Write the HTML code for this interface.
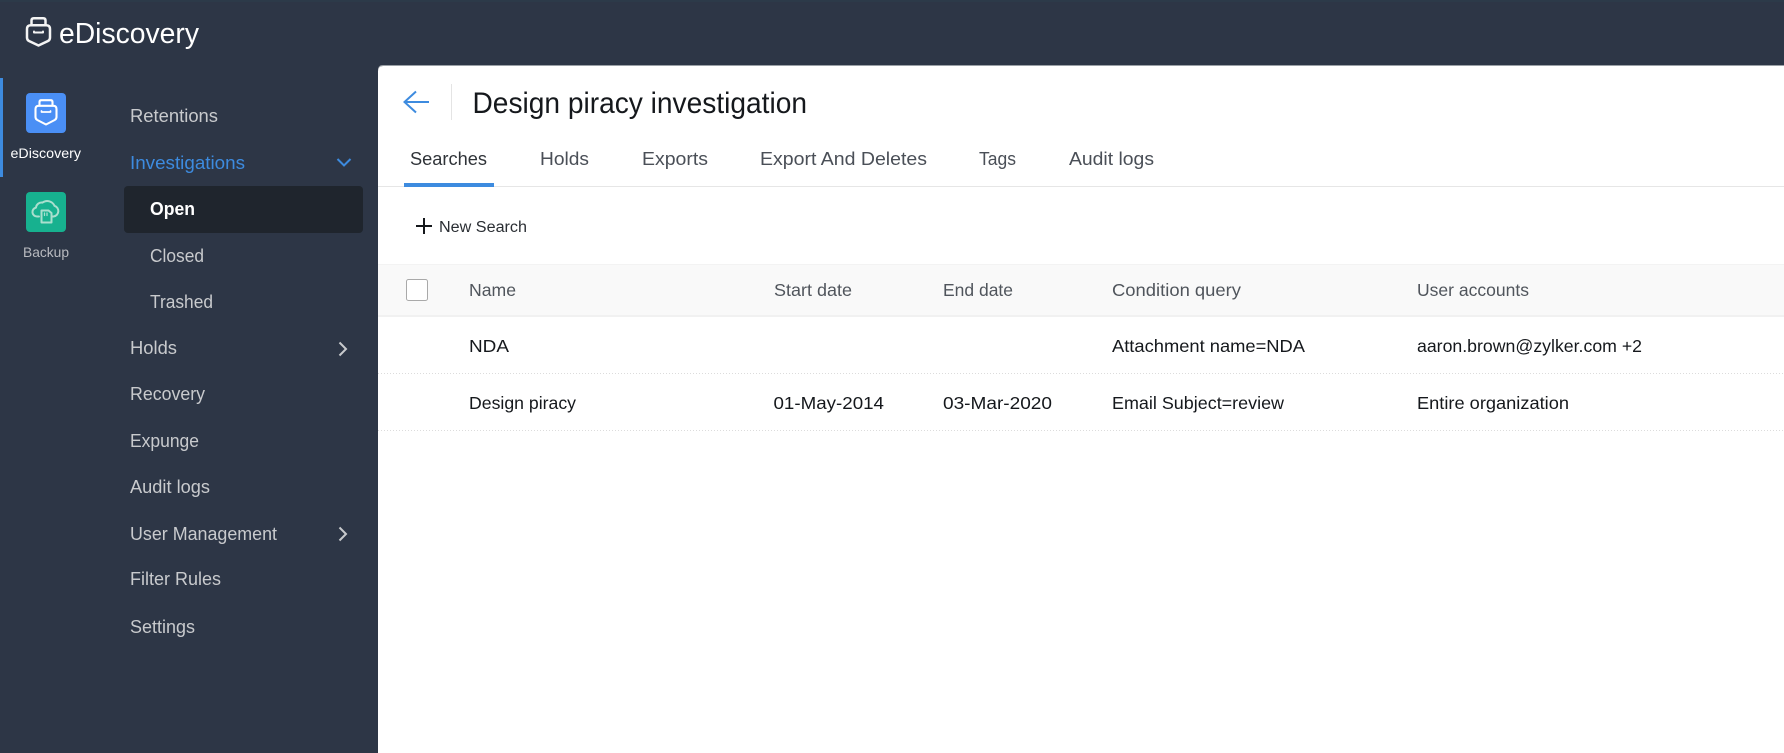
<!DOCTYPE html>
<html lang="en">
<head>
<meta charset="utf-8">
<title>eDiscovery</title>
<style>
html,body{margin:0;padding:0;width:1784px;height:753px;overflow:hidden;background:#2d3646}
svg{display:block}
text{font-family:"Liberation Sans",sans-serif}
.m{font-size:18.500px;fill:#c8cacd}
.t{font-size:18.500px;fill:#4a4f57}
.h{font-size:17.500px;fill:#50555c}
.c{font-size:17.500px;fill:#15181c}
</style>
</head>
<body>
<svg width="1784" height="753" viewBox="0 0 1784 753" xmlns="http://www.w3.org/2000/svg">
<rect width="1784" height="753" fill="#2d3646"/>
<rect x="0" y="0" width="1784" height="2" fill="#2c3a49"/>

<!-- Logo -->
<g fill="none" stroke="#f4f4f4" stroke-width="2.500" stroke-linejoin="round" stroke-linecap="round">
<path d="M31.500 25v-4.500q0-2.300 2.300-2.300h9.400q2.300 0 2.300 2.300V25"/>
<path d="M27 29q0-3.800 3.800-3.800h15.400q3.800 0 3.800 3.800v8.500q0 2.500-2 3.500l-9.500 4.500-9.500-4.500q-2-1-2-3.500z"/>
<path d="M34 31.500v1h9v-1" stroke-width="2"/>
</g>
<text x="59" y="43" font-size="29" fill="#fff" textLength="140" lengthAdjust="spacingAndGlyphs">eDiscovery</text>

<!-- App rail -->
<rect x="0" y="78" width="3" height="99" fill="#3d8bdf"/>
<rect x="26" y="93" width="40" height="40" rx="4" fill="#4a8ff5"/>
<g fill="none" stroke="#fff" stroke-width="2.100" stroke-linejoin="round" stroke-linecap="round">
<path d="M39.500 105.500v-3.500q0-1.800 1.800-1.800h9.400q1.800 0 1.800 1.800v3.500"/>
<path d="M35.500 109q0-3.200 3.200-3.200h14.600q3.200 0 3.200 3.200v8q0 2-1.800 3l-8.700 4.500-8.700-4.500q-1.800-1-1.800-3z"/>
<path d="M41.500 111v1h9v-1" stroke-width="1.700"/>
</g>
<text x="10.500" y="158" font-size="14" fill="#fff" textLength="70.500" lengthAdjust="spacingAndGlyphs">eDiscovery</text>

<rect x="26" y="192" width="40" height="40" rx="4" fill="#17b18f"/>
<g fill="none" stroke="#a9dfce" stroke-width="2" stroke-linejoin="round" stroke-linecap="round">
<path d="M39 216.500h-2a4.500 4.500 0 0 1-1-8.900 5.500 5.500 0 0 1 6.500-5 8 8 0 0 1 12 3.200 5.500 5.500 0 0 1-1 10.700h-1"/>
<path d="M41.500 210.500h7l3 2.500v9.500h-10z"/>
<path d="M44.500 213v2.500M47 213v2.500" stroke-width="1.300"/>
</g>
<text x="23" y="257" font-size="14" fill="#b9bbc0" textLength="46" lengthAdjust="spacingAndGlyphs">Backup</text>

<!-- Menu -->
<text class="m" x="130" y="122" textLength="88" lengthAdjust="spacingAndGlyphs">Retentions</text>
<text class="m" x="130" y="169" style="fill:#3d8bdf" textLength="115" lengthAdjust="spacingAndGlyphs">Investigations</text>
<path d="M337.500 159l6.500 6.500 6.500-6.500" fill="none" stroke="#3d8bdf" stroke-width="2"/>
<rect x="124" y="186" width="239" height="47" rx="4" fill="#1f252d"/>
<text class="m" x="150" y="215" style="fill:#fff;font-weight:bold" textLength="45" lengthAdjust="spacingAndGlyphs">Open</text>
<text class="m" x="150" y="262" textLength="54" lengthAdjust="spacingAndGlyphs">Closed</text>
<text class="m" x="150" y="308" textLength="63" lengthAdjust="spacingAndGlyphs">Trashed</text>
<text class="m" x="130" y="354" textLength="47" lengthAdjust="spacingAndGlyphs">Holds</text>
<path d="M339.500 342.500l6.500 6.500-6.500 6.500" fill="none" stroke="#c8cacd" stroke-width="2"/>
<text class="m" x="130" y="400" textLength="75" lengthAdjust="spacingAndGlyphs">Recovery</text>
<text class="m" x="130" y="447" textLength="69" lengthAdjust="spacingAndGlyphs">Expunge</text>
<text class="m" x="130" y="493" textLength="80" lengthAdjust="spacingAndGlyphs">Audit logs</text>
<text class="m" x="130" y="540" textLength="147" lengthAdjust="spacingAndGlyphs">User Management</text>
<path d="M339.500 527.500l6.500 6.500-6.500 6.500" fill="none" stroke="#c8cacd" stroke-width="2"/>
<text class="m" x="130" y="585" textLength="91" lengthAdjust="spacingAndGlyphs">Filter Rules</text>
<text class="m" x="130" y="633" textLength="65" lengthAdjust="spacingAndGlyphs">Settings</text>

<!-- Main panel -->
<path d="M378 753V71q0-5 5-5H1784V753z" fill="#fff"/>
<path d="M378 71q0-5 5-5H1784V65H383q-5 0-5 5z" fill="#9aa0a6"/>

<path d="M429 102H405M416 91.500L404.500 102l11.500 10.500" fill="none" stroke="#3d8bdf" stroke-width="2"/>
<rect x="451" y="84" width="1" height="36" fill="#e4e4e4"/>
<text x="472.500" y="113" font-size="30" fill="#15181c" textLength="334.500" lengthAdjust="spacingAndGlyphs">Design piracy investigation</text>

<text class="t" x="410" y="165" style="fill:#2f3338" textLength="77" lengthAdjust="spacingAndGlyphs">Searches</text>
<text class="t" x="540" y="165" textLength="49" lengthAdjust="spacingAndGlyphs">Holds</text>
<text class="t" x="642" y="165" textLength="66" lengthAdjust="spacingAndGlyphs">Exports</text>
<text class="t" x="760" y="165" textLength="167" lengthAdjust="spacingAndGlyphs">Export And Deletes</text>
<text class="t" x="979" y="165" textLength="37" lengthAdjust="spacingAndGlyphs">Tags</text>
<text class="t" x="1069" y="165" textLength="85" lengthAdjust="spacingAndGlyphs">Audit logs</text>
<rect x="378" y="186" width="1406" height="1" fill="#e6e6e6"/>
<rect x="404" y="183" width="90" height="4" fill="#3d8bdf"/>

<path d="M416 226h16M424 218v16" fill="none" stroke="#15181c" stroke-width="2"/>
<text x="439" y="232" font-size="15.500" fill="#2a2e33" textLength="88" lengthAdjust="spacingAndGlyphs">New Search</text>

<!-- Table -->
<rect x="378" y="264" width="1406" height="1" fill="#f3f3f3"/>
<rect x="378" y="265" width="1406" height="51" fill="#f9f9f9"/>
<rect x="378" y="315" width="1406" height="2" fill="#f1f1f1"/>
<rect x="406.500" y="279.500" width="21" height="21" rx="2" fill="#fff" stroke="#a9a9a9"/>
<text class="h" x="469" y="296" textLength="47" lengthAdjust="spacingAndGlyphs">Name</text>
<text class="h" x="774" y="296" textLength="78" lengthAdjust="spacingAndGlyphs">Start date</text>
<text class="h" x="943" y="296" textLength="70" lengthAdjust="spacingAndGlyphs">End date</text>
<text class="h" x="1112" y="296" textLength="129" lengthAdjust="spacingAndGlyphs">Condition query</text>
<text class="h" x="1417" y="296" textLength="112" lengthAdjust="spacingAndGlyphs">User accounts</text>

<text class="c" x="469" y="352" textLength="40" lengthAdjust="spacingAndGlyphs">NDA</text>
<text class="c" x="1112" y="352" textLength="193" lengthAdjust="spacingAndGlyphs">Attachment name=NDA</text>
<text class="c" x="1417" y="352" textLength="225" lengthAdjust="spacingAndGlyphs">aaron.brown@zylker.com +2</text>
<line x1="378" y1="373.500" x2="1784" y2="373.500" stroke="#dcdcdc" stroke-dasharray="1 2"/>

<text class="c" x="469" y="409" textLength="107" lengthAdjust="spacingAndGlyphs">Design piracy</text>
<text class="c" x="773.500" y="409" textLength="110.500" lengthAdjust="spacingAndGlyphs">01-May-2014</text>
<text class="c" x="943" y="409" textLength="109" lengthAdjust="spacingAndGlyphs">03-Mar-2020</text>
<text class="c" x="1112" y="409" textLength="172" lengthAdjust="spacingAndGlyphs">Email Subject=review</text>
<text class="c" x="1417" y="409" textLength="152" lengthAdjust="spacingAndGlyphs">Entire organization</text>
<line x1="378" y1="430.500" x2="1784" y2="430.500" stroke="#dcdcdc" stroke-dasharray="1 2"/>
</svg>
</body>
</html>
